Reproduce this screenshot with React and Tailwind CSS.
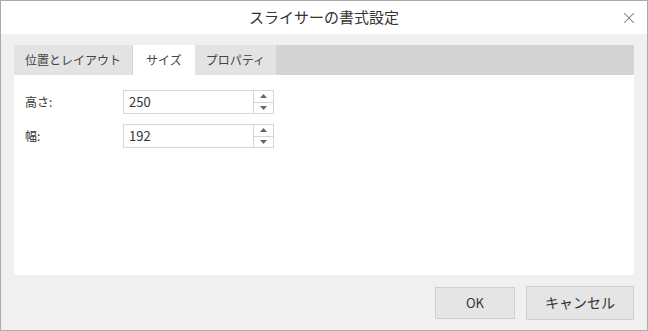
import { X } from 'lucide-react'

const font = { fontFamily: '"Noto Sans CJK JP", "Noto Sans", sans-serif' }

function Spinner({ value }) {
  return (
    <div className="flex h-[24px] w-[151px] border border-[#d5d5d5] bg-white">
      <div className="flex flex-1 items-center pl-[5px] text-[13px] text-[#333]">{value}</div>
      <div className="flex w-[20px] flex-col border-l border-[#d5d5d5]">
        <div className="flex flex-1 items-center justify-center border-b border-[#d5d5d5]">
          <svg width="7" height="4" viewBox="0 0 7 4"><path d="M3.5 0L7 4H0z" fill="#666" /></svg>
        </div>
        <div className="flex flex-1 items-center justify-center">
          <svg width="7" height="4" viewBox="0 0 7 4"><path d="M0 0h7L3.5 4z" fill="#666" /></svg>
        </div>
      </div>
    </div>
  )
}

export default function App() {
  const tabs = ['位置とレイアウト', 'サイズ', 'プロパティ']
  return (
    <div className="flex h-[331px] w-[648px] flex-col border border-[#ababab] bg-[#f0f0f0]" style={font}>
      <div className="relative flex h-[33px] items-center justify-center bg-white text-[15px] text-[#333]">
        スライサーの書式設定
        <X className="absolute right-[9px] top-[8px] h-[18px] w-[18px] text-[#777]" strokeWidth={1.4} />
      </div>
      <div className="flex flex-1 flex-col px-[13px] pt-[11px]">
        <div className="flex h-[30px] bg-[#d3d3d3]">
          {tabs.map((t, i) => (
            <div
              key={t}
              className={`flex items-center px-[11px] text-[12px] text-[#444] ${
                i === 1 ? 'bg-white px-[13px]' : 'bg-[#e3e3e3] border-r border-[#d3d3d3]'
              }`}
            >
              {t}
            </div>
          ))}
        </div>
        <div className="flex h-[200px] flex-col gap-[10px] bg-white pl-[11px] pt-[15px]">
          <div className="flex items-center">
            <div className="w-[98px] text-[12px] text-[#333]">高さ:</div>
            <Spinner value="250" />
          </div>
          <div className="flex items-center">
            <div className="w-[98px] text-[12px] text-[#333]">幅:</div>
            <Spinner value="192" />
          </div>
        </div>
        <div className="flex flex-1 items-center justify-end gap-[11px]">
          <button className="h-[32px] w-[80px] border border-[#cfcfcf] bg-[#e5e5e5] text-[13px] text-[#333]">OK</button>
          <button className="h-[34px] w-[108px] border border-[#cfcfcf] bg-[#e5e5e5] text-[14px] text-[#333]">キャンセル</button>
        </div>
      </div>
    </div>
  )
}
